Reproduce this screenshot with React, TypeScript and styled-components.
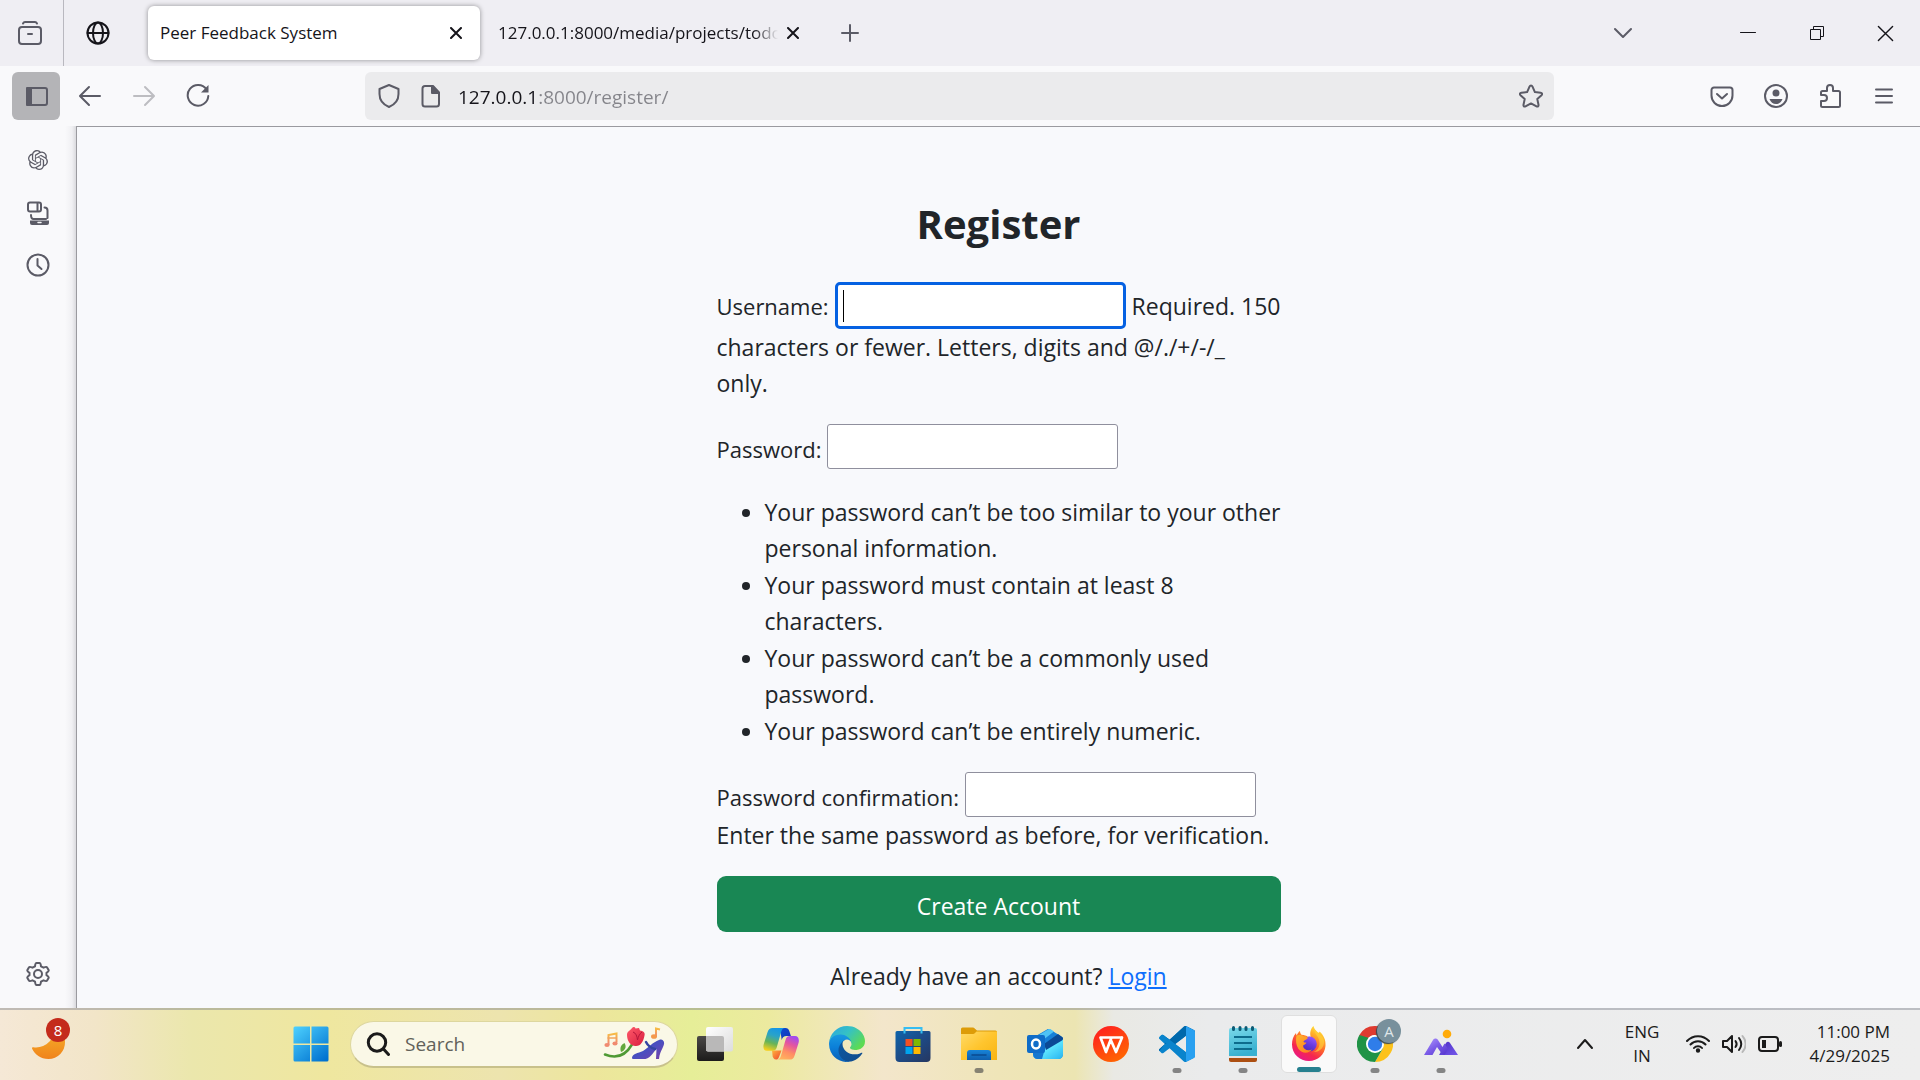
import React from "react";
import styled, { createGlobalStyle } from "styled-components";
import { SiOpenai } from "react-icons/si";

const GlobalStyle = createGlobalStyle`
  *, *::before, *::after { box-sizing: border-box; }
  body {
    margin: 0;
    font-family: "Open Sans", "Noto Sans", sans-serif;
    color: #212529;
  }
  button, input { font: inherit; color: inherit; }
  svg { display: block; }
`;

const Screen = styled.div`
  display: flex;
  flex-direction: column;
  height: 100vh;
  overflow: hidden;
  background: #f9f9fb;
`;

const TabStrip = styled.header`
  display: flex;
  align-items: center;
  height: 66px;
  flex: none;
  background: #efeef3;
  color: #15141a;
  font-size: 17px;
`;

const IconButton = styled.button<{ $w?: number; $h?: number; $active?: boolean; $color?: string }>`
  display: flex;
  align-items: center;
  justify-content: center;
  flex: none;
  width: ${(p) => p.$w ?? 54}px;
  height: ${(p) => p.$h ?? 48}px;
  padding: 0;
  border: 0;
  border-radius: 6px;
  background: ${(p) => (p.$active ? "#b4b4b7" : "transparent")};
  color: ${(p) => p.$color ?? "#5b5b66"};
`;

const ViewCell = styled.div`
  display: flex;
  align-items: center;
  height: 100%;
  padding-right: 3px;
  border-right: 1px solid #b9b8bf;
`;

const Tab = styled.div<{ $selected?: boolean }>`
  display: flex;
  align-items: center;
  width: 332px;
  height: 54px;
  padding: 0 4px 0 ${(p) => (p.$selected ? 12 : 18)}px;
  border-radius: 6px;
  background: ${(p) => (p.$selected ? "#fff" : "transparent")};
  box-shadow: ${(p) => (p.$selected ? "0 0 5px rgba(0, 0, 0, 0.4)" : "none")};
`;

const TabTitle = styled.span<{ $fade?: boolean }>`
  flex: 1;
  min-width: 0;
  overflow: hidden;
  white-space: nowrap;
  line-height: 24px;
  mask-image: ${(p) => (p.$fade ? "linear-gradient(to left, transparent, #000 24px)" : "none")};
`;

const TabList = styled.nav`
  display: flex;
  margin-left: 16px;
`;

const Spacer = styled.div`
  flex: 1;
`;

const WindowControls = styled.div`
  display: flex;
  margin-left: 60px;
`;

const Toolbar = styled.div`
  display: flex;
  align-items: center;
  height: 60px;
  flex: none;
  padding: 0 9px 0 12px;
`;

const NavButtons = styled.div`
  display: flex;
  width: 353px;
`;

const UrlBar = styled.div`
  display: flex;
  align-items: center;
  flex: 1;
  height: 48px;
  padding: 0 2px 0 3px;
  border-radius: 6px;
  background: #ebebed;
`;

const UrlInput = styled.input`
  flex: 1;
  min-width: 0;
  height: 40px;
  padding: 2px 0 0 6px;
  border: 0;
  outline: 0;
  font-size: 19px;
  color: transparent;
  background: linear-gradient(to right, #15141a 86px, #84848a 86px);
  background-clip: text;
  -webkit-background-clip: text;
`;

const ToolbarActions = styled.div`
  display: flex;
  justify-content: flex-end;
  width: 357px;
`;

const Body = styled.div`
  display: flex;
  flex: 1;
  min-height: 0;
`;

const Sidebar = styled.aside`
  display: flex;
  flex-direction: column;
  align-items: center;
  flex: none;
  width: 76px;
  padding: 8px 0;
  background: linear-gradient(to left, #dadade, #f0f0f3 4px, #f9f9fb 11px);
`;

const Page = styled.main`
  flex: 1;
  overflow: hidden;
  border-top: 1px solid #9a9a9f;
  border-left: 1px solid #9a9a9f;
  background: #f8f9fc;
  padding-top: 72px;
  font-size: 23px;
  line-height: 36px;
`;

const Form = styled.form`
  width: 564px;
  margin: 0 auto;
`;

const Title = styled.h1`
  margin: 0 0 33px;
  font-size: 40px;
  line-height: 50px;
  font-weight: 700;
  text-align: center;
`;

const Field = styled.div`
  margin-bottom: 23px;
`;

const Label = styled.label`
  font-size: 22px;
`;

const TextInput = styled.input<{ $focused?: boolean }>`
  width: 291px;
  height: ${(p) => (p.$focused ? 47 : 45)}px;
  padding: ${(p) => (p.$focused ? 1 : 4)}px 6px 0;
  border: ${(p) => (p.$focused ? "3px solid #0561e2" : "1px solid #8f8f9d")};
  border-radius: ${(p) => (p.$focused ? 5 : 3)}px;
  outline: 0;
  font-size: 22px;
  caret-color: transparent;
  background: ${(p) =>
    p.$focused ? "linear-gradient(#000, #000) 5px center / 1px 32px no-repeat, #fff" : "#fff"};
`;

const Rules = styled.ul`
  margin: 25px 0 23px;
  padding-left: 48px;
`;

const Rule = styled.li`
  margin-bottom: 1px;
`;

const Submit = styled.button`
  display: block;
  width: 100%;
  height: 56px;
  padding: 3px 0 0;
  border: 0;
  border-radius: 9px;
  background: #198754;
  color: #fff;
`;

const Footnote = styled.p`
  margin: 26px 0 0;
  text-align: center;
`;

const Link = styled.a`
  color: #0d6efd;
`;

const Taskbar = styled.footer`
  display: flex;
  align-items: center;
  flex: none;
  height: 72px;
  padding: 0 30px 2px 18px;
  border-top: 2px solid rgba(120, 125, 135, 0.42);
  color: #1b1b1b;
  background: linear-gradient(
    to right,
    #f5e8d6 0%,
    #f2e5c8 5%,
    #ebe7ac 10%,
    #efe79f 17%,
    #ede4ae 26%,
    #ede69c 31%,
    #e6ee98 36%,
    #ecea9f 40%,
    #f3e6cb 46%,
    #efe5b8 52%,
    #ece5b2 56%,
    #e9e9e4 58%,
    #eaebec 63%,
    #eeeeee 100%
  );
  background-clip: border-box;
  background-origin: border-box;
`;

const WeatherButton = styled.button`
  position: relative;
  display: flex;
  align-items: center;
  width: 260px;
  height: 60px;
  padding: 0 0 0 14px;
  border: 0;
  background: transparent;
`;

const Count = styled.span`
  position: absolute;
  left: 28px;
  top: 4px;
  width: 24px;
  height: 24px;
  border-radius: 50%;
  background: #c42b1c;
  color: #fff;
  font-size: 15px;
  line-height: 24px;
  text-align: center;
`;

const AppButton = styled.button<{ $active?: boolean }>`
  position: relative;
  display: flex;
  align-items: center;
  justify-content: center;
  width: 56px;
  height: 58px;
  margin: 0 5px;
  padding: 0;
  border: ${(p) => (p.$active ? "1px solid #dfdfdf" : "0")};
  border-radius: 6px;
  background: ${(p) => (p.$active ? "#fafafa" : "transparent")};
`;

const Running = styled.span<{ $active?: boolean }>`
  position: absolute;
  bottom: 0;
  left: 50%;
  transform: translateX(-50%);
  width: ${(p) => (p.$active ? 24 : 9)}px;
  height: 5px;
  border-radius: 3px;
  background: ${(p) => (p.$active ? "#26808f" : "rgba(70, 70, 70, 0.62)")};
`;

const SearchBox = styled.label`
  display: flex;
  align-items: center;
  width: 328px;
  height: 47px;
  margin: 0 4px 0 6px;
  padding: 0 10px 0 15px;
  border: 1px solid #ddd79f;
  border-bottom: 2px solid #c8c18b;
  border-radius: 24px;
  background: #faf8e7;
`;

const SearchInput = styled.input`
  flex: 1;
  min-width: 0;
  padding: 0 0 0 15px;
  border: 0;
  outline: 0;
  background: transparent;
  font-size: 19px;
  &::placeholder {
    color: #62615a;
    opacity: 1;
  }
`;

const Tray = styled.div`
  display: flex;
  align-items: center;
  margin-left: auto;
  font-size: 17px;
  line-height: 24px;
`;

const TrayButton = styled.button<{ $w: number; $align?: string }>`
  display: flex;
  flex-direction: column;
  align-items: ${(p) => p.$align ?? "center"};
  width: ${(p) => p.$w}px;
  padding: 0;
  border: 0;
  background: transparent;
  white-space: nowrap;
`;

type LineProps = { size?: number; sw?: number; box?: number; children: React.ReactNode };
const Line = ({ size = 24, sw = 2, box = 24, children }: LineProps) => (
  <svg
    width={size}
    height={size}
    viewBox={`0 0 ${box} ${box}`}
    fill="none"
    stroke="currentColor"
    strokeWidth={sw}
    strokeLinecap="round"
    strokeLinejoin="round"
    aria-hidden="true"
  >
    {children}
  </svg>
);

const Cross = ({ size = 12, sw = 2 }: { size?: number; sw?: number }) => (
  <Line size={size} box={12} sw={sw}>
    <path d="M1 1l10 10M11 1L1 11" />
  </Line>
);

const ArtSvg = ({ children }: { children: React.ReactNode }) => (
  <svg width="36" height="36" viewBox="0 0 36 36" aria-hidden="true">
    {children}
  </svg>
);

const Grad = ({ id, stops, d = [0, 0, 1, 1] }: { id: string; stops: string[]; d?: number[] }) => (
  <linearGradient id={id} x1={d[0]} y1={d[1]} x2={d[2]} y2={d[3]}>
    {stops.map((c, i) => (
      <stop key={i} offset={i / (stops.length - 1)} stopColor={c} />
    ))}
  </linearGradient>
);

const Windows = () => (
  <ArtSvg>
    <defs>
      <linearGradient id="win" gradientUnits="userSpaceOnUse" x1="0" y1="0" x2="30" y2="36">
        <stop offset="0" stopColor="#4fd3ff" />
        <stop offset="1" stopColor="#0072d0" />
      </linearGradient>
    </defs>
    <path
      fill="url(#win)"
      d="M2 .5h15v17H.5V2A1.500 1.500 0 0 1 2 .5zM18.500 .5H34A1.500 1.500 0 0 1 35.500 2v15.500h-17zM.5 19H17v16.500H2A1.500 1.500 0 0 1 .5 34zM18.500 19h17v15a1.500 1.500 0 0 1-1.500 1.500H18.500z"
    />
  </ArtSvg>
);

const TaskView = () => (
  <ArtSvg>
    <defs>
      <Grad id="tv1" stops={["#4a4846", "#1c1b1b"]} d={[0, 0, 0, 1]} />
      <Grad id="tv2" stops={["#ffffff", "#dcdcdc"]} />
    </defs>
    <rect x="0" y="10" width="27" height="25" rx="2" fill="url(#tv1)" />
    <rect x="9" y="1" width="27" height="24.500" rx="2" fill="url(#tv2)" />
    <path d="M9 10h16a2 2 0 0 1 2 2v13.500H11a2 2 0 0 1-2-2z" fill="#b9b8b8" />
  </ArtSvg>
);

const Copilot = () => (
  <ArtSvg>
    <defs>
      <Grad id="cp1" stops={["#1596e6", "#2aa3c8", "#67b457", "#f5cf1d"]} d={[0.6, 0, 0.3, 1]} />
      <Grad id="cp2" stops={["#a14bf0", "#e4559f", "#ff8f63", "#ffb25e"]} d={[0.7, 0, 0.3, 1]} />
      <Grad id="cp3" stops={["#0a4ad0", "#1436b8"]} />
      <Grad id="cp4" stops={["#ffb33c", "#f0452e"]} />
    </defs>
    <path d="M17 2h5.500c2 0 3.200 1 3.800 3l1.600 5h-4.500c-2.500 0-4 1.500-4.700 4z" fill="url(#cp3)" />
    <path d="M9 24.500h9.500L16 31c-.8 2-1.500 2.500-3 2.500-2 0-2.800-1.500-3.300-3z" fill="url(#cp4)" />
    <path d="M9.500 2H22c-2 0-3 1.200-3.700 3.500l-4.600 16c-.7 2.200-2 3.200-4.200 3.200H4C.6 24.700-.2 21.500.8 18L4.600 6C5.500 3.200 7 2 9.500 2z" fill="url(#cp1)" />
    <path d="M26.700 33.600H14.200c2 0 3-1.200 3.700-3.500l4.600-16c.7-2.600 2-4 4.500-4h5c3.400 0 4.500 3.400 3.500 7l-3.900 12.300c-.9 3-2.400 4.200-4.900 4.200z" fill="url(#cp2)" />
  </ArtSvg>
);

const Edge = () => (
  <svg width="36" height="36" viewBox="0 0 256 256" aria-hidden="true">
    <defs>
      <Grad id="ed1" stops={["#0c59a4", "#114a8b"]} />
      <Grad id="ed2" stops={["#1b9de2", "#0b7fd8", "#0a5fb4"]} d={[0.5, 0, 0.5, 1]} />
      <Grad id="ed3" stops={["#2aa5e2", "#35c1c5", "#5ddb52"]} d={[0, 0, 1, 0.6]} />
    </defs>
    <path fill="url(#ed1)" d="M231 190.500c-3.400 1.800-6.900 3.400-10.500 4.700a101.500 101.500 0 0 1-35.900 6.500c-47.200 0-88.500-32.500-88.500-74.200 0-11.400 6.400-21.900 16.400-27.300-42.700 1.800-53.800 46.300-53.800 72.500 0 73.900 68.100 81.400 82.800 81.400 7.900 0 19.800-2.300 27-4.600l1.300-.4a128.300 128.300 0 0 0 66.600-52.800 4 4 0 0 0-5.400-5.800z" />
    <path fill="url(#ed2)" d="M105.700 241.400a79.200 79.200 0 0 1-22.700-21.300 80.700 80.700 0 0 1 29.500-119.900c3.100-1.500 8.500-4.200 15.600-4.100a32.500 32.500 0 0 1 25.700 13c4 5.400 6.300 11.900 6.400 18.700 0-.2 24.500-79.600-80-79.600-43.900 0-80 41.600-80 78.200a130.200 130.200 0 0 0 12.100 56 128 128 0 0 0 156.400 67 75.500 75.500 0 0 1-62.800-8z" />
    <path fill="url(#ed3)" d="M152.300 148.900c-.8 1-3.300 2.500-3.300 5.700 0 2.600 1.700 5.100 4.700 7.200 14.400 10 41.500 8.700 41.600 8.700 10.700 0 21.100-2.900 30.300-8.300a61.400 61.400 0 0 0 30.400-52.900c.3-22.400-8-37.300-11.300-43.900C223.500 23.900 177.700 0 128 0A128 128 0 0 0 0 126.200c.5-36.500 36.800-66 80-66 3.500 0 23.500.3 42 10.100a72.600 72.600 0 0 1 30.900 29.300c6.100 10.600 7.200 24.100 7.200 29.500s-2.700 13.300-7.800 19.900z" />
  </svg>
);

const Store = () => (
  <ArtSvg>
    <defs>
      <Grad id="st" stops={["#0e64ab", "#1d4a86", "#263760"]} />
    </defs>
    <path d="M.5 6.500A1.500 1.500 0 0 1 2 5h32a1.500 1.500 0 0 1 1.500 1.500V32a4 4 0 0 1-4 4h-27a4 4 0 0 1-4-4z" fill="url(#st)" />
    <path d="M9.500 7.500V2h17v5.500" fill="none" stroke="#35bdf2" strokeWidth="2" />
    <path d="M10.500 13h7v7h-7z" fill="#f25022" />
    <path d="M18.500 13h7v7h-7z" fill="#7fba00" />
    <path d="M10.500 21h7v7h-7z" fill="#00a4ef" />
    <path d="M18.500 21h7v7h-7z" fill="#ffb900" />
  </ArtSvg>
);

const Explorer = () => (
  <ArtSvg>
    <defs>
      <Grad id="ex" stops={["#ffdb69", "#ffc52e", "#f8b411"]} />
      <Grad id="ex2" stops={["#1784d8", "#0f5fae"]} d={[0, 0, 0, 1]} />
    </defs>
    <path d="M0 3a1.500 1.500 0 0 1 1.500-1.500h10c1 0 1.500.3 2.200 1L16 4.500h18.500A1.500 1.500 0 0 1 36 6v5H0z" fill="#dd9c08" />
    <path d="M0 8h11.500c1.200 0 1.800-.3 2.500-1l1.500-1.500H36V34H0z" fill="url(#ex)" />
    <path d="M6 34v-7a3 3 0 0 1 3-3h18a3 3 0 0 1 3 3v7z" fill="url(#ex2)" />
    <path d="M11 29h14" stroke="#0a4a90" strokeWidth="1.500" strokeLinecap="round" />
  </ArtSvg>
);

const Outlook = () => (
  <ArtSvg>
    <defs>
      <Grad id="ol" stops={["#22b2ee", "#5ee6ff", "#28b4f0"]} />
    </defs>
    <path d="M20 3.500c1-.6 2-.6 3 0l11.500 7c1 .6 1.500 1.500 1.500 2.500v15c0 3-2 5-5 5H11c-3 0-5-2-5-5V14c0-1.500.5-2.500 2-3.500z" fill="#1680d8" />
    <path d="M6 23l30-10v15c0 3-2 5-5 5H11c-3 0-5-2-5-5z" fill="url(#ol)" />
    <path d="M12 9l9-5.500c1-.6 2-.6 3 0l3 2L16 14z" fill="#4fc3f5" />
    <path d="M17 18L31 8l4 3c1.500 1 1.500 2.500 0 3.500L19 24z" fill="#0b4a96" />
    <path d="M6 25l11 1-2 7h-4c-3 0-5-2-5-5z" fill="#1477d0" />
    <rect y="9" width="18" height="18" rx="2" fill="#0f6cc8" />
    <ellipse cx="9" cy="18" rx="4" ry="4.500" fill="none" stroke="#fff" strokeWidth="2.500" />
  </ArtSvg>
);

const Wps = () => (
  <ArtSvg>
    <defs>
      <Grad id="wps" stops={["#ff1f1f", "#ff6a00"]} d={[0.2, 0, 0.8, 1]} />
    </defs>
    <circle cx="18" cy="18" r="18" fill="url(#wps)" />
    <path d="M29 11.500H18.500M7.500 11.500h11L13 26zM18 14.500L23 26l6-14.500" fill="none" stroke="#fff" strokeWidth="2.700" strokeLinejoin="round" strokeLinecap="round" />
  </ArtSvg>
);

const codePath =
  "M23.150 2.587L18.210.21a1.494 1.494 0 0 0-1.705.29l-9.460 8.630-4.120-3.128a.999.999 0 0 0-1.276.057L.327 7.261A1 1 0 0 0 .326 8.740L3.899 12 .326 15.260a1 1 0 0 0 .001 1.479L1.650 17.940a.999.999 0 0 0 1.276.057l4.120-3.128 9.460 8.630a1.492 1.492 0 0 0 1.704.29l4.942-2.377A1.500 1.500 0 0 0 24 20.060V3.939a1.500 1.500 0 0 0-.85-1.352zm-5.146 14.861L10.826 12l7.178-5.448v10.896z";

const Code = () => (
  <svg width="36" height="36" viewBox="0 0 24 24" aria-hidden="true">
    <defs>
      <clipPath id="vsTop">
        <path d="M7 0h17v12h-13.100L3.900 12 0 17v-5L4 11.900z" />
      </clipPath>
      <clipPath id="vsRight">
        <path d="M18 0h6v24h-6z" />
      </clipPath>
    </defs>
    <path d={codePath} fill="#0a84cc" />
    <path d={codePath} fill="#0068ab" clipPath="url(#vsTop)" />
    <path d="M.33 7.260L1.650 6.060a1 1 0 0 1 1.280-.06L18 17.450V24l-1.500-.5z" fill="#0a84cc" />
    <path d={codePath} fill="#29a0f0" clipPath="url(#vsRight)" />
  </svg>
);

const Notepad = () => (
  <ArtSvg>
    <defs>
      <Grad id="np" stops={["#7ad9ea", "#38b0d0"]} d={[0, 0, 0.3, 1]} />
    </defs>
    <path d="M4 30h28v4a2 2 0 0 1-2 2H6a2 2 0 0 1-2-2z" fill="#ac4f12" />
    <path d="M4 28h28v4H4z" fill="#e8e4e2" />
    <path d="M6 2h24a2 2 0 0 1 2 2v26H4V4a2 2 0 0 1 2-2z" fill="url(#np)" />
    <path d="M8.500 1.500v2M15 1.500v2M21 1.500v2M27.500 1.500v2" stroke="#0d5a75" strokeWidth="3" strokeLinecap="round" />
    <path d="M9 11h18M9 17h18M9 23h18" stroke="#0d6b8c" strokeWidth="2" />
  </ArtSvg>
);

const Firefox = () => (
  <ArtSvg>
    <defs>
      <Grad id="ff1" stops={["#fff24a", "#ffb329", "#ff6a2b", "#f5274e", "#e8178a"]} d={[0.85, 0, 0.3, 1]} />
      <Grad id="ff2" stops={["#9a5cff", "#6a3be0", "#4a2bb8"]} d={[0.8, 0, 0.3, 1]} />
      <Grad id="ff3" stops={["#ffb52b", "#ff7a1f"]} />
    </defs>
    <path
      d="M22.500 0c.5 3 2.700 4.500 4.700 6.800.9-.2 1.200-.6 1.300-1.200 4 3.300 6.500 8.300 6 14.400C33.800 28.500 26.800 35 18 35 8.700 35 1 28 1 18.500 1 14 2.200 10 5 7c0 1 .3 1.800.8 2.500C6.500 7.500 7.500 6 9 5c0 1.500.5 2.700 1.500 3.700 3 .2 5 .8 6.500 2.300 1-.4 1.800-.4 2.800-.2-1.300-3.500-.3-8 2.700-10.800z"
      fill="url(#ff1)"
    />
    <circle cx="18.300" cy="18" r="7.500" fill="url(#ff2)" />
    <path d="M5.500 9.500c2-.8 5-.7 7.500 1 1.500 0 2.800.2 4 1.300-1 2-3.500 2.200-4.500 3.500 0 1.200 1.500 1.300 3 1.500-1 2-2.500 1.500-3.500 3 .5 4 5 5.500 9 3.700-2.500 4-10 4.500-13.500-.5C5 19.500 4.500 14 5.500 9.500z" fill="url(#ff3)" />
    <path d="M23 3c0 5 5.500 7 5.500 14 0 5-3 8-6 9 7 0 11-5 10.500-11C32.500 10 28 9 23 3z" fill="#ffd23a" opacity=".65" />
  </ArtSvg>
);

const Chrome = () => (
  <ArtSvg>
    <path d="M18 18v18A18 18 0 0 1 2.410 9z" fill="#1f9346" />
    <path d="M25.800 22.500L18 36a18 18 0 0 0 15.590-27H18z" fill="#fcc21b" />
    <path d="M10.200 22.500L2.410 9l8 5 15.400 8.500L18 36z" fill="#1f9346" />
    <path d="M33.590 9H18a9 9 0 0 0-7.800 4.500L8 16 2.410 9a18 18 0 0 1 31.180 0z" fill="#df3a2f" />
    <path d="M2.410 9l7.800 13.500L12 12z" fill="#1f9346" />
    <circle cx="18" cy="18" r="9" fill="#fff" />
    <circle cx="18" cy="18" r="7.200" fill="#2f7de9" />
  </ArtSvg>
);

const Profile = styled.span`
  position: absolute;
  right: 2px;
  top: 4px;
  width: 24px;
  height: 24px;
  border-radius: 50%;
  background: #78909c;
  box-shadow: -1px 1px 1px #37474f;
  color: #dfe6e9;
  font-size: 15px;
  line-height: 24px;
  text-align: center;
`;

const Peaks = () => (
  <ArtSvg>
    <defs>
      <Grad id="pk1" stops={["#b39cff", "#7b5ce8", "#5232cc"]} />
      <Grad id="pk2" stops={["#4b2cc4", "#7458ea"]} />
    </defs>
    <circle cx="24" cy="8" r="4.300" fill="#ffab09" />
    <path d="M16 29l7-12c1-1.600 3-1.600 4 0l8 12z" fill="url(#pk2)" />
    <path d="M1 29l9-15c1.200-2 3.800-2 5 0l4.500 7 2-3.500L25 23l-2.500 4.500C21.500 29.300 20 29 19 28l-5-7-4.500 8z" fill="url(#pk1)" />
  </ArtSvg>
);

const Doodle = () => (
  <svg width="64" height="36" viewBox="0 0 64 36" aria-hidden="true">
    <defs>
      <Grad id="nt" stops={["#f7bb44", "#f0827a"]} d={[0, 0, 0, 1]} />
      <Grad id="rs" stops={["#ff5a6a", "#d81d3f"]} />
      <Grad id="sh" stops={["#3949ab", "#4a4fc0", "#7a3fa8"]} />
    </defs>
    <g fill="none" stroke="url(#nt)" strokeWidth="2">
      <path d="M5.500 19V9l8-1.500v9" />
      <path d="M53 11V2.500l4 1" />
    </g>
    <path d="M4.500 12h9" stroke="#f0a45c" strokeWidth="1.500" />
    <ellipse cx="4" cy="19" rx="2.600" ry="2" fill="#f08a70" />
    <ellipse cx="12" cy="17.500" rx="2.600" ry="2" fill="#f08a70" />
    <ellipse cx="51" cy="10.500" rx="3" ry="2.300" fill="#f49a4c" />
    <path d="M2 28.500c11 4.500 20 2 27-10" fill="none" stroke="#4f9a35" strokeWidth="2.500" strokeLinecap="round" />
    <path d="M18 26c-1.500-4 0-7.500 3.500-9 2 3 1.500 7-3.500 9z" fill="#63a83c" />
    <path d="M24 9c0-4 3-4 5-7 1.500-1.500 3-1 3.500.5L36 2l1 2.500c3 .5 5.500 2 4.500 5C40.500 15 38 20 33 20c-5 .5-9-5-9-11z" fill="url(#rs)" />
    <path d="M30 6c3 1 4 4 4.500 8 1-4 2-6 4.500-8" fill="none" stroke="#b5163a" strokeWidth="1" />
    <path d="M29 32c0-4 6-5 11-7 5-3 10-9 16-11 3-1 4 0 5 2 1 4-4 8-5 17h-3l.5-10c-4 4-5 8-11 10H31c-1.500 0-2-.3-2-1z" fill="url(#sh)" />
    <path d="M43 16c2 4 5 6 9 7" fill="none" stroke="#3445a2" strokeWidth="2.500" strokeLinecap="round" />
  </svg>
);

type AppEntry = { name: string; icon: React.ReactNode; running?: boolean; active?: boolean; badge?: string };
const apps: AppEntry[] = [
  { name: "Task view", icon: <TaskView /> },
  { name: "Copilot", icon: <Copilot /> },
  { name: "Edge", icon: <Edge /> },
  { name: "Store", icon: <Store /> },
  { name: "File Explorer", icon: <Explorer />, running: true },
  { name: "Outlook", icon: <Outlook /> },
  { name: "WPS Office", icon: <Wps /> },
  { name: "Visual Studio Code", icon: <Code />, running: true },
  { name: "Notepad", icon: <Notepad />, running: true },
  { name: "Firefox", icon: <Firefox />, running: true, active: true },
  { name: "Chrome", icon: <Chrome />, running: true, badge: "A" },
  { name: "Photos", icon: <Peaks />, running: true },
];

const rules = [
  "Your password can’t be too similar to your other personal information.",
  "Your password must contain at least 8 characters.",
  "Your password can’t be a commonly used password.",
  "Your password can’t be entirely numeric.",
];

function BrowserTabs() {
  return (
    <TabStrip>
      <ViewCell>
        <IconButton $w={60} aria-label="Firefox View">
          <Line>
            <path d="M5 2.500c.5-1 1-1.500 2-1.500h10c1 0 1.500.5 2 1.500" />
            <rect x="1" y="6" width="22" height="17" rx="3" />
            <path d="M10 13h4" />
          </Line>
        </IconButton>
      </ViewCell>
      <IconButton $w={68} $color="#15141a" aria-label="Pinned tab">
        <Line>
          <circle cx="12" cy="12" r="10.500" />
          <ellipse cx="12" cy="12" rx="5" ry="10.500" />
          <path d="M1.500 12h21" />
        </Line>
      </IconButton>
      <TabList>
        <Tab $selected>
          <TabTitle>Peer Feedback System</TabTitle>
          <IconButton $w={40} $h={40} $color="#15141a" aria-label="Close tab">
            <Cross />
          </IconButton>
        </Tab>
        <Tab>
          <TabTitle $fade>127.0.0.1:8000/media/projects/todo_</TabTitle>
          <IconButton $w={30} $h={40} $color="#15141a" aria-label="Close tab">
            <Cross />
          </IconButton>
        </Tab>
      </TabList>
      <IconButton $w={76} aria-label="New tab">
        <Line size={18} box={18} sw={2}>
          <path d="M9 1v16M1 9h16" />
        </Line>
      </IconButton>
      <Spacer />
      <IconButton $w={60} aria-label="List all tabs">
        <Line size={18} box={18} sw={2}>
          <path d="M1 5l8 8 8-8" />
        </Line>
      </IconButton>
      <WindowControls>
        <IconButton $w={69} $color="#15141a" aria-label="Minimize">
          <Line size={16} box={16} sw={1}>
            <path d="M.5 7.500h15" />
          </Line>
        </IconButton>
        <IconButton $w={69} $color="#15141a" aria-label="Restore">
          <svg width="16" height="16" viewBox="0 0 16 16" fill="none" stroke="currentColor">
            <path d="M1.500 4.500h10v10h-10zM4.500 4.500v-3h10v10h-3" />
          </svg>
        </IconButton>
        <IconButton $w={69} $color="#15141a" aria-label="Close window">
          <Cross size={17} sw={1} />
        </IconButton>
      </WindowControls>
    </TabStrip>
  );
}

function BrowserToolbar() {
  return (
    <Toolbar>
      <NavButtons>
        <IconButton $w={48} $active aria-label="Toggle sidebar">
          <Line>
            <rect x="3" y="4" width="20" height="17" rx="2" />
            <path d="M3 4h4v17H3z" fill="currentColor" />
          </Line>
        </IconButton>
        <IconButton $w={60} aria-label="Back">
          <Line>
            <path d="M22 12H2.500M11 3l-9 9 9 9" />
          </Line>
        </IconButton>
        <IconButton $w={48} $color="#bdbdc1" aria-label="Forward">
          <Line>
            <path d="M2 12h19.500M13 3l9 9-9 9" />
          </Line>
        </IconButton>
        <IconButton $w={60} aria-label="Reload">
          <Line>
            <path d="M20.500 5.500A10.300 10.300 0 1 0 22.300 12" />
            <path d="M22.500 1v7.500H15z" fill="currentColor" stroke="none" />
          </Line>
        </IconButton>
      </NavButtons>
      <UrlBar>
        <IconButton $w={42} aria-label="Tracking protection">
          <Line>
            <path d="M12 1l9.500 4v5c0 5.500-3.500 10.500-9.500 13C6 20.500 2.500 15.500 2.500 10V5z" />
          </Line>
        </IconButton>
        <IconButton $w={42} aria-label="Site information">
          <Line>
            <path d="M6 2h8l6 6.500V20a2.500 2.500 0 0 1-2.500 2.500H6A2.500 2.500 0 0 1 3.500 20V4.500A2.500 2.500 0 0 1 6 2z" />
            <path d="M13 2v7h7z" fill="currentColor" />
          </Line>
        </IconButton>
        <UrlInput aria-label="Address" defaultValue="127.0.0.1:8000/register/" />
        <IconButton $w={42} aria-label="Bookmark">
          <Line>
            <path d="M12 1.500c.8 0 1.200.5 1.500 1.200l2.400 5.400 5.700.6c1.600.2 2 1.500.9 2.600l-4.200 3.800 1.200 5.700c.3 1.500-.8 2.200-2 1.500L12 19.400l-5.500 2.900c-1.200.7-2.300 0-2-1.500l1.200-5.700-4.200-3.800c-1.100-1.100-.7-2.400.9-2.600l5.700-.6 2.400-5.400c.3-.7.700-1.200 1.500-1.200z" />
          </Line>
        </IconButton>
      </UrlBar>
      <ToolbarActions>
        <IconButton aria-label="Save to Pocket">
          <Line>
            <path d="M4 3.500h16A2.500 2.500 0 0 1 22.500 6v5.500a10.500 10.500 0 0 1-21 0V6A2.500 2.500 0 0 1 4 3.500z" />
            <path d="M7 10l5 4.500 5-4.500" />
          </Line>
        </IconButton>
        <IconButton aria-label="Account">
          <Line>
            <circle cx="12" cy="12" r="11" />
            <circle cx="12" cy="9" r="3.500" fill="currentColor" stroke="none" />
            <path d="M5.500 15h13c-1 3-3.500 5-6.500 5s-5.500-2-6.500-5z" fill="currentColor" stroke="none" />
          </Line>
        </IconButton>
        <IconButton aria-label="Extensions">
          <Line>
            <path d="M9 7V4a3 3 0 0 1 6 0v3h5.500A1.500 1.500 0 0 1 22 8.500v13a1.500 1.500 0 0 1-1.500 1.500h-16A1.500 1.500 0 0 1 3 21.500V17h3a3 3 0 0 0 0-6H3V8.500A1.500 1.500 0 0 1 4.500 7z" />
          </Line>
        </IconButton>
        <IconButton aria-label="Menu">
          <Line size={18} box={18}>
            <path d="M1 2.500h16M1 9h16M1 15.500h16" />
          </Line>
        </IconButton>
      </ToolbarActions>
    </Toolbar>
  );
}

function BrowserSidebar() {
  return (
    <Sidebar>
      <IconButton $h={52} aria-label="ChatGPT">
        <SiOpenai size={20} />
      </IconButton>
      <IconButton $h={53} aria-label="Synced tabs">
        <Line>
          <rect x="2" y="1.500" width="13" height="9" rx="2" />
          <path d="M11.500 2v8M18.500 6.500c2.500 0 3 1 3 3V17M5 14c0 2 .5 4 2.500 4H20" />
          <path d="M4 19.500h19V22a2 2 0 0 1-2 2H6a2 2 0 0 1-2-2z" fill="currentColor" stroke="none" />
          <path d="M12 21.500h3" stroke="#f9f9fb" strokeWidth="1.500" />
        </Line>
      </IconButton>
      <IconButton $h={52} aria-label="History">
        <Line>
          <circle cx="12" cy="12" r="10.500" />
          <path d="M11.500 6v6.500l4 3.500" />
        </Line>
      </IconButton>
      <Spacer />
      <IconButton $h={53} aria-label="Customize sidebar">
        <Line>
          <circle cx="12" cy="12" r="4" />
          <path d="M10.500 1h3c.8 0 1.200 1 1.500 3.300l2.500 1.400c2-.9 3.200-1 3.600-.3l1.500 2.700c.4.7-.2 1.500-2.100 2.700v2.400c1.900 1.200 2.500 2 2.100 2.700l-1.500 2.700c-.4.700-1.600.6-3.600-.3L15 19.700c-.3 2.300-.7 3.300-1.500 3.300h-3c-.8 0-1.200-1-1.500-3.300l-2.500-1.400c-2 .9-3.200 1-3.600.3l-1.500-2.700c-.4-.7.2-1.500 2.100-2.700v-2.400C1.600 9.600 1 8.800 1.400 8.100l1.500-2.700c.4-.7 1.600-.6 3.600.3L9 4.300C9.300 2 9.700 1 10.500 1z" />
        </Line>
      </IconButton>
    </Sidebar>
  );
}

function RegisterPage() {
  return (
    <Page>
      <Form onSubmit={(e) => e.preventDefault()}>
        <Title>Register</Title>
        <Field>
          <Label htmlFor="username">Username:</Label> <TextInput id="username" type="text" $focused /> Required. 150
          <br />
          characters or fewer. Letters, digits and @/./+/-/_ only.
        </Field>
        <Field>
          <Label htmlFor="password1">Password:</Label> <TextInput id="password1" type="password" />
        </Field>
        <Rules>
          {rules.map((r) => (
            <Rule key={r}>{r}</Rule>
          ))}
        </Rules>
        <Field>
          <Label htmlFor="password2">Password confirmation:</Label> <TextInput id="password2" type="password" />
          <br />
          Enter the same password as before, for verification.
        </Field>
        <Submit type="submit">Create Account</Submit>
        <Footnote>
          Already have an account? <Link href="#login">Login</Link>
        </Footnote>
      </Form>
    </Page>
  );
}

function SystemTaskbar() {
  return (
    <Taskbar>
      <WeatherButton aria-label="Weather">
        <svg width="34" height="34" viewBox="0 0 34 34" aria-hidden="true">
          <defs>
            <Grad id="moon" stops={["#f6b52a", "#f0831c"]} d={[0.5, 0, 0.5, 1]} />
          </defs>
          <path d="M24 0c6 3 9 8.500 9 15A16.500 16.500 0 0 1 16.500 32C8.500 32 3 27.500 0 21.500c0-1 .5-1.500 1.500-1.200C12 22 23 13 24 0z" fill="url(#moon)" />
        </svg>
        <Count>8</Count>
      </WeatherButton>
      <AppButton aria-label="Start">
        <Windows />
      </AppButton>
      <SearchBox>
        <Line size={24} sw={3}>
          <circle cx="11" cy="10.500" r="8.700" />
          <path d="M17.500 17l5 5.500" />
        </Line>
        <SearchInput placeholder="Search" aria-label="Search" />
        <Doodle />
      </SearchBox>
      {apps.map((a) => (
        <AppButton key={a.name} $active={a.active} aria-label={a.name}>
          {a.icon}
          {a.badge && <Profile>{a.badge}</Profile>}
          {a.running && <Running $active={a.active} />}
        </AppButton>
      ))}
      <Tray>
        <TrayButton $w={50} aria-label="Hidden icons">
          <Line size={18} box={18} sw={2}>
            <path d="M2 13l7-8 7 8" />
          </Line>
        </TrayButton>
        <TrayButton $w={64}>
          <span>ENG</span>
          <span>IN</span>
        </TrayButton>
        <TrayButton $w={48} aria-label="Wi-Fi">
          <Line sw={2}>
            <path d="M1 9c6-6.500 16-6.500 22 0M4.500 12.500c4-4.500 11-4.500 15 0M8 16c2-2.500 6-2.500 8 0" />
            <circle cx="12" cy="18.500" r="1.200" fill="currentColor" />
          </Line>
        </TrayButton>
        <TrayButton $w={24} aria-label="Volume">
          <Line sw={2}>
            <path d="M1 9h4l5-5v16l-5-5H1z" />
            <path d="M13.500 9c1.500 2 1.500 4 0 6M17 6c3 4 3 8 0 12" />
            <path d="M20.500 4c4 5 4 11 0 16" stroke="#b8b8b8" />
          </Line>
        </TrayButton>
        <TrayButton $w={48} aria-label="Battery">
          <Line sw={2}>
            <rect x="1" y="5" width="19" height="14" rx="3" />
            <path d="M4 8h4v8H4z" fill="currentColor" stroke="none" />
            <path d="M22.500 10.500v3" strokeWidth="3" />
          </Line>
        </TrayButton>
        <TrayButton $w={96} $align="flex-end">
          <span>11:00 PM</span>
          <span>4/29/2025</span>
        </TrayButton>
      </Tray>
    </Taskbar>
  );
}

export default function App() {
  return (
    <Screen>
      <GlobalStyle />
      <BrowserTabs />
      <BrowserToolbar />
      <Body>
        <BrowserSidebar />
        <RegisterPage />
      </Body>
      <SystemTaskbar />
    </Screen>
  );
}
